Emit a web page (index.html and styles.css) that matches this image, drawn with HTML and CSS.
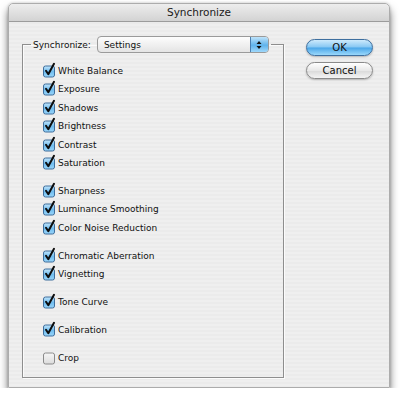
FILE: index.html
```html
<!DOCTYPE html>
<html lang="en">
<head>
    <meta charset="UTF-8">
    <title>Synchronize</title>
    <link rel="stylesheet" href="styles.css">
</head>
<body>
    <div class="window">
        <div class="titlebar">Synchronize</div>
        <div class="content">
            <fieldset class="group">
                <legend class="legend">
                    <span class="legend-label">Synchronize:</span>
                    <span class="popup">
                        <span class="popup-text">Settings</span>
                        <span class="stepper">
                            <svg width="8" height="10" viewBox="0 0 8 10"><path d="M4 1 L6.5 4 L1.5 4 Z M4 9 L6.5 6 L1.5 6 Z" fill="#111"/></svg>
                        </span>
                    </span>
                </legend>

                <div class="set">
                    <label class="row"><svg class="cb" width="14" height="16" viewBox="0 0 14 16"><use href="#on"/></svg>White Balance</label>
                    <label class="row"><svg class="cb" width="14" height="16" viewBox="0 0 14 16"><use href="#on"/></svg>Exposure</label>
                    <label class="row"><svg class="cb" width="14" height="16" viewBox="0 0 14 16"><use href="#on"/></svg>Shadows</label>
                    <label class="row"><svg class="cb" width="14" height="16" viewBox="0 0 14 16"><use href="#on"/></svg>Brightness</label>
                    <label class="row"><svg class="cb" width="14" height="16" viewBox="0 0 14 16"><use href="#on"/></svg>Contrast</label>
                    <label class="row"><svg class="cb" width="14" height="16" viewBox="0 0 14 16"><use href="#on"/></svg>Saturation</label>
                </div>
                <div class="set">
                    <label class="row"><svg class="cb" width="14" height="16" viewBox="0 0 14 16"><use href="#on"/></svg>Sharpness</label>
                    <label class="row"><svg class="cb" width="14" height="16" viewBox="0 0 14 16"><use href="#on"/></svg>Luminance Smoothing</label>
                    <label class="row"><svg class="cb" width="14" height="16" viewBox="0 0 14 16"><use href="#on"/></svg>Color Noise Reduction</label>
                </div>
                <div class="set">
                    <label class="row"><svg class="cb" width="14" height="16" viewBox="0 0 14 16"><use href="#on"/></svg>Chromatic Aberration</label>
                    <label class="row"><svg class="cb" width="14" height="16" viewBox="0 0 14 16"><use href="#on"/></svg>Vignetting</label>
                </div>
                <div class="set">
                    <label class="row"><svg class="cb" width="14" height="16" viewBox="0 0 14 16"><use href="#on"/></svg>Tone Curve</label>
                </div>
                <div class="set">
                    <label class="row"><svg class="cb" width="14" height="16" viewBox="0 0 14 16"><use href="#on"/></svg>Calibration</label>
                </div>
                <div class="set">
                    <label class="row"><svg class="cb" width="14" height="16" viewBox="0 0 14 16"><use href="#off"/></svg>Crop</label>
                </div>
            </fieldset>

            <div class="buttons">
                <button class="btn btn-default">OK</button>
                <button class="btn">Cancel</button>
            </div>
        </div>
    </div>

    <!-- checkbox glyphs -->
    <svg width="0" height="0" class="defs">
        <defs>
            <linearGradient id="blue" x1="0" y1="0" x2="0" y2="1">
                <stop offset="0" stop-color="#c4e6fb"/>
                <stop offset="0.5" stop-color="#6fbcef"/>
                <stop offset="1" stop-color="#9ad6fa"/>
            </linearGradient>
            <linearGradient id="white" x1="0" y1="0" x2="0" y2="1">
                <stop offset="0" stop-color="#f6f6f6"/>
                <stop offset="1" stop-color="#dcdcdc"/>
            </linearGradient>
            <g id="on">
                <rect x="1.5" y="4" width="11" height="11" rx="2" fill="url(#blue)" stroke="#3f6e9c" stroke-width="1"/>
                <path d="M4 8.8 L6.3 12.2 L12 1.8" fill="none" stroke="#0d0d0d" stroke-width="2" stroke-linecap="round" stroke-linejoin="round"/>
            </g>
            <g id="off">
                <rect x="1.5" y="4" width="11" height="11" rx="2" fill="url(#white)" stroke="#8a8a8a" stroke-width="1"/>
            </g>
        </defs>
    </svg>
</body>
</html>
```

FILE: styles.css
```css
body {
    margin: 0;
    background: #fff;
    font-family: "DejaVu Sans", sans-serif;
    font-size: 9px;
    color: #111;
}
.defs {
    position: absolute;
}
.window {
    box-sizing: border-box;
    width: 382px;
    height: 385px;
    margin: 3px 0 0 8px;
    border: 1px solid #acacac;
    border-radius: 5px 5px 0 0;
    background: repeating-linear-gradient(to bottom, #efefef 0, #efefef 2px, #ebebeb 2px, #ebebeb 4px);
    box-shadow: 0 6px 9px rgba(0, 0, 0, 0.55), 0 0 3px rgba(0, 0, 0, 0.2);
}
.titlebar {
    box-sizing: border-box;
    height: 18px;
    border-bottom: 1px solid #9c9c9c;
    border-radius: 5px 5px 0 0;
    background: linear-gradient(to bottom, #ededed, #d3d3d3);
    text-align: center;
    font-size: 10.5px;
    line-height: 17px;
    color: #1a1a1a;
}
.content {
    display: flex;
    align-items: flex-start;
    padding: 14px 0 0 13px;
}
.group {
    box-sizing: border-box;
    width: 262px;
    height: 342px;
    margin: 0;
    padding: 0 0 0 19px;
    border: 1px solid #8e8e8e;
    box-shadow: inset 1px 1px 0 #fbfbfb, 1px 1px 0 #fbfbfb;
}
.legend {
    display: flex;
    align-items: center;
    gap: 6px;
    margin-left: -11px;
    padding: 0 2px;
    height: 17px;
}
.popup {
    box-sizing: border-box;
    display: flex;
    align-items: center;
    width: 172px;
    height: 17px;
    border: 1px solid #9a9a9a;
    border-radius: 4px;
    background: linear-gradient(to bottom, #fdfdfd, #e4e4e4);
    overflow: hidden;
}
.popup-text {
    flex: 1;
    padding-left: 6px;
}
.stepper {
    display: flex;
    align-items: center;
    justify-content: center;
    width: 17px;
    height: 100%;
    border-left: 1px solid #4c7fb0;
    background: linear-gradient(to bottom, #bfe3fa, #5fb3ec 55%, #9fd8fb);
}
.set {
    margin-top: 9.6px;
}
.set:first-of-type {
    margin-top: 8.8px;
}
.row {
    display: flex;
    align-items: center;
    gap: 2px;
    height: 18.4px;
}
.cb {
    overflow: visible;
    margin-top: -2px;
}
.buttons {
    display: flex;
    flex-direction: column;
    gap: 6px;
    margin: 3px 0 0 22px;
}
.btn {
    box-sizing: border-box;
    width: 67px;
    height: 17px;
    padding: 0;
    border: 1px solid #8a8a8a;
    border-radius: 9px;
    background: linear-gradient(to bottom, #ffffff, #e8e8e8 50%, #d9d9d9 51%, #f4f4f4);
    font-family: "DejaVu Sans", sans-serif;
    font-size: 10px;
    color: #111;
    box-shadow: 0 1px 2px rgba(0, 0, 0, 0.25);
}
.btn-default {
    border-color: #3e6f9f;
    background: linear-gradient(to bottom, #cdeafc, #86c7f3 48%, #4aa6e8 52%, #9ad8fb);
}
```
